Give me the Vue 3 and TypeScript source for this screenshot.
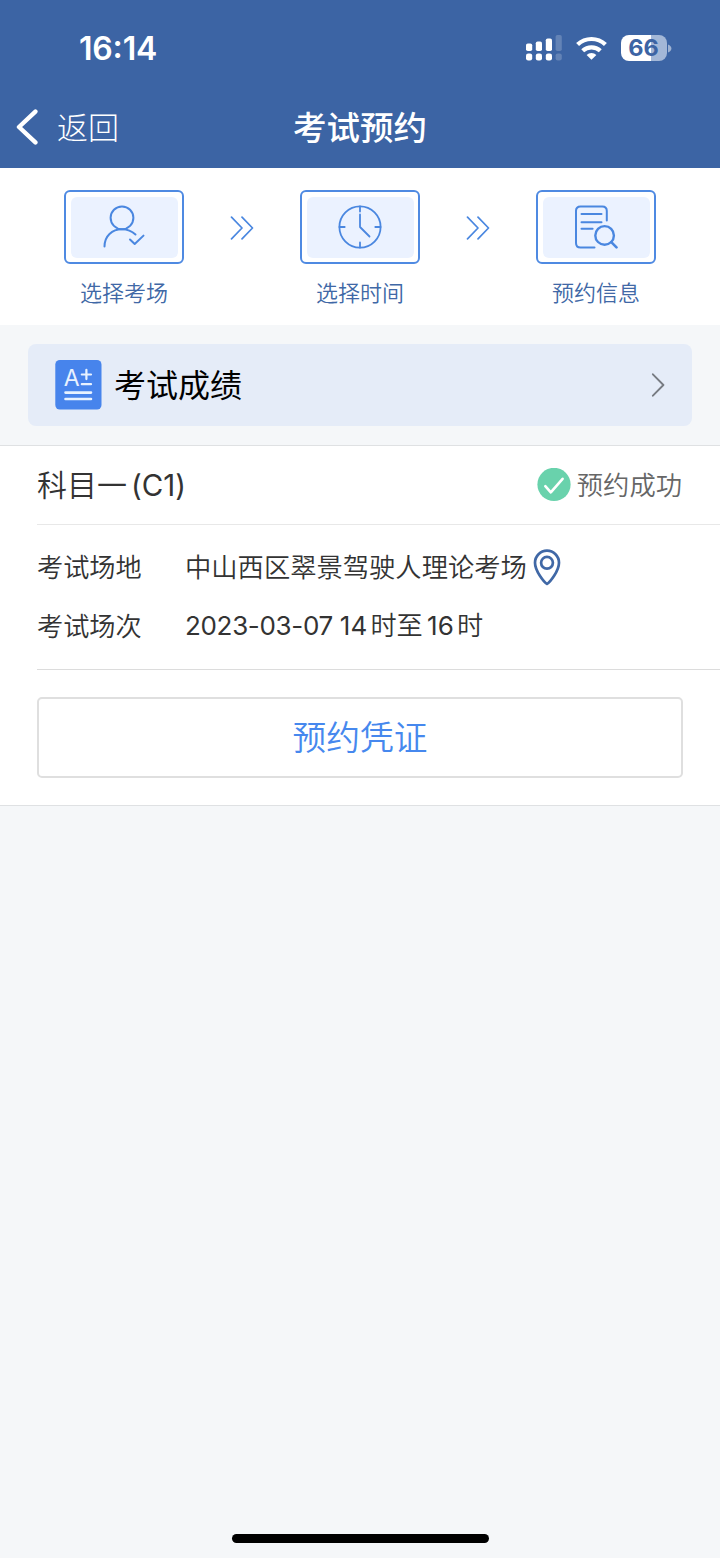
<script setup lang="ts">
interface Step {
  label: string
  icon: 'person' | 'clock' | 'document'
}

const steps: Step[] = [
  { label: '选择考场', icon: 'person' },
  { label: '选择时间', icon: 'clock' },
  { label: '预约信息', icon: 'document' },
]
</script>

<template>
  <div class="screen">
    <header class="header">
      <div class="status">
        <span class="time">16<span class="colon">:</span>14</span>
        <div class="indicators">
          <svg class="signal" width="36" height="26" viewBox="0 0 36 26" fill="#fff">
            <rect x="0" y="8.5" width="6.2" height="7.5" rx="1.8" />
            <rect x="9.8" y="6.5" width="6.2" height="9.5" rx="1.8" />
            <rect x="19.8" y="3.5" width="6.2" height="12.5" rx="1.8" />
            <rect x="29.6" y="0" width="6.2" height="16" rx="1.8" opacity=".2" />
            <rect x="0" y="18.4" width="6.2" height="7" rx="2.2" />
            <rect x="9.8" y="18.4" width="6.2" height="7" rx="2.2" />
            <rect x="19.8" y="18.4" width="6.2" height="7" rx="2.2" />
            <rect x="29.6" y="18.4" width="6.2" height="7" rx="2.2" opacity=".2" />
          </svg>
          <svg class="wifi" width="31" height="24" viewBox="0 0 31 24" fill="none" stroke="#fff" stroke-width="4.2">
            <path d="M1.6 8.6A20 20 0 0 1 29.4 8.6" />
            <path d="M6.7 14.8A12.8 12.8 0 0 1 24.3 14.8" />
            <path d="M15.5 23.8L10.6 19A7.2 7.2 0 0 1 20.4 19Z" fill="#fff" stroke="none" />
          </svg>
          <div class="battery">
            <div class="cell">66</div>
            <svg width="4" height="9" viewBox="0 0 4 9"><path d="M0 0.5Q3.4 2 3.4 4.5T0 8.5Z" fill="#fff" opacity=".5" /></svg>
          </div>
        </div>
      </div>
      <div class="nav">
        <div class="back">
          <svg width="22" height="36" viewBox="0 0 22 36" fill="none" stroke="#fff" stroke-width="4.4" stroke-linecap="round" stroke-linejoin="round">
            <path d="M19.4 2.6L3 18L19.4 33.4" />
          </svg>
          <span class="back-text">返回</span>
        </div>
        <h1 class="title">考试预约</h1>
        <div></div>
      </div>
    </header>

    <section class="steps">
      <template v-for="(step, i) in steps" :key="step.label">
        <svg v-if="i > 0" class="arrows" width="24" height="24" viewBox="0 0 24 24" fill="none" stroke="#4a87e0" stroke-width="1.7" stroke-linecap="round" stroke-linejoin="round">
          <path d="M1.5 1.2L12 12L1.5 22.8M12 1.2L22.5 12L12 22.8" />
        </svg>
        <div class="step">
          <div class="frame">
            <div class="tile">
              <svg v-if="step.icon === 'person'" width="44" height="46" viewBox="0 0 44 46" fill="none" stroke="#4a87e0" stroke-width="2" stroke-linecap="round" stroke-linejoin="round">
                <circle cx="20" cy="13.8" r="11.4" />
                <path d="M2.5 42.5C2.5 32 10 25.2 20 25.2C25.5 25.2 30 27.2 33.5 30.5" />
                <path d="M28 35.5L32.7 40L41.5 31.6" />
              </svg>
              <svg v-else-if="step.icon === 'clock'" width="44" height="46" viewBox="0 0 44 46" fill="none" stroke="#4a87e0" stroke-width="1.8" stroke-linecap="round" stroke-linejoin="round">
                <circle cx="22" cy="23" r="20.6" />
                <path d="M22 2.5V7.5M22 38.5V43.5M1.5 23H6.7M37.3 23H42.5M22 10.5V23L31.5 32.5" />
              </svg>
              <svg v-else width="44" height="46" viewBox="0 0 44 46" fill="none" stroke="#4a87e0" stroke-width="2" stroke-linecap="round" stroke-linejoin="round">
                <path d="M20.5 43.5H6.5Q2 43.5 2 39V6.9Q2 2.4 6.5 2.4H28.3Q32.8 2.4 32.8 6.9V16.5" />
                <path d="M7.5 10H27.5M7.5 18.3H27.5M7.5 24.8H18.6" />
                <circle cx="30.6" cy="31.4" r="9.3" stroke-width="2.4" />
                <path d="M37.3 38.2L42.5 43.4" stroke-width="2.6" />
              </svg>
            </div>
          </div>
          <span class="step-label">{{ step.label }}</span>
        </div>
      </template>
    </section>

    <section class="score-band">
      <div class="score">
        <svg width="47" height="50" viewBox="0 0 47 50">
          <rect x="0.3" y="0" width="46.2" height="49.6" rx="4.5" fill="#4784ec" />
          <text class="grade" x="8.8" y="25.6">A</text>
          <path d="M26.8 14.5H36M31.4 9.8V19.1M26.8 24.2H36" fill="none" stroke="#e8f2ff" stroke-width="2.2" stroke-linecap="round" />
          <path d="M10.5 32.6H36M10.5 39H36" stroke="#e8f2ff" stroke-width="2.6" stroke-linecap="round" />
        </svg>
        <span class="score-text">考试成绩</span>
        <svg width="14" height="24" viewBox="0 0 14 24" fill="none" stroke="#777b82" stroke-width="1.9" stroke-linecap="round" stroke-linejoin="round">
          <path d="M1.9 1.3L12.4 12L1.9 22.7" />
        </svg>
      </div>
    </section>

    <section class="card">
      <div class="card-head">
        <span class="subject">科目一<span class="latin">(C1)</span></span>
        <div class="result">
          <svg width="34" height="34" viewBox="0 0 34 34">
            <circle cx="17" cy="16.4" r="16.6" fill="#69d2ac" />
            <path d="M8.3 18.2L13.8 24.4L25.6 10.8" fill="none" stroke="#fff" stroke-width="2.6" stroke-linecap="round" stroke-linejoin="round" />
          </svg>
          <span class="result-text">预约成功</span>
        </div>
      </div>
      <div class="details">
        <div class="row">
          <span class="key">考试场地</span>
          <span class="place">中山西区翠景驾驶人理论考场</span>
          <svg class="pin" width="28" height="37" viewBox="0 0 28 37" fill="none" stroke="#4068a6" stroke-width="2.7" stroke-linejoin="round">
            <path d="M14 35C11 33 2 22 2 13.7A12 12 0 0 1 26 13.7C26 22 17 33 14 35Z" />
            <circle cx="14" cy="13.8" r="5.9" />
          </svg>
        </div>
        <div class="row">
          <span class="key">考试场次</span>
          <span class="session"><span class="date">2023-03-07 </span>14<i>时至</i>16<i>时</i></span>
        </div>
      </div>
      <div class="action">
        <button class="voucher" type="button">预约凭证</button>
      </div>
    </section>

    <div class="home-bar"></div>
  </div>
</template>

<style>
body {
  margin: 0;
  background: #f5f7f9;
}
</style>

<style scoped>
.screen {
  box-sizing: border-box;
  width: 720px;
  height: 1558px;
  display: flex;
  flex-direction: column;
  overflow: hidden;
  background: #f5f7f9;
  font-family: Inter, "Noto Sans CJK SC", sans-serif;
  color: #333;
  white-space: nowrap;
}
.screen svg {
  display: block;
  flex: none;
}
.header {
  height: 168px;
  flex: none;
  background: #3c64a4;
  color: #fff;
}
.status {
  height: 88px;
  box-sizing: border-box;
  padding: 8px 48.5px 0 79px;
  display: flex;
  align-items: center;
  justify-content: space-between;
}
.time {
  font-size: 32px;
  font-weight: 600;
  letter-spacing: -0.2px;
}
.colon {
  display: inline-block;
  transform: translateY(-2px);
}
.indicators {
  display: flex;
  align-items: center;
}
.wifi {
  margin: 0 14px 0 13.5px;
}
.battery {
  display: flex;
  align-items: center;
  gap: 1px;
}
.cell {
  width: 46px;
  height: 26px;
  border-radius: 8px;
  background: linear-gradient(90deg, #fff 66%, #a3b7d7 66%);
  color: #3c64a4;
  font-size: 23.5px;
  font-weight: 700;
  line-height: 26px;
  text-align: center;
}
.nav {
  height: 80px;
  padding-bottom: 4px;
  box-sizing: border-box;
  display: grid;
  grid-template-columns: 1fr auto 1fr;
  align-items: center;
}
.back {
  display: flex;
  align-items: center;
  gap: 19px;
  padding-left: 16px;
  font-family: "Noto Sans CJK SC", sans-serif;
  font-size: 31px;
  font-weight: 300;
  line-height: 40px;
}
.back svg {
  margin-top: 2px;
}
.title {
  margin: 0;
  font-family: "Noto Sans CJK SC", sans-serif;
  font-size: 33.5px;
  font-weight: 500;
  line-height: 44px;
}
.steps {
  height: 157px;
  flex: none;
  box-sizing: border-box;
  padding: 22px 64px 0;
  display: flex;
  justify-content: space-between;
  align-items: flex-start;
  background: #fff;
}
.arrows {
  margin-top: 26px;
}
.step {
  width: 120px;
  display: flex;
  flex-direction: column;
  align-items: center;
}
.frame {
  box-sizing: border-box;
  width: 120px;
  height: 74px;
  padding: 4.5px;
  border: 2px solid #4f8ae2;
  border-radius: 6px;
}
.tile {
  height: 100%;
  border-radius: 6px;
  background: #ebf2ff;
  display: flex;
  align-items: center;
  justify-content: center;
}
.step-label {
  margin-top: 11px;
  font-family: "Noto Sans CJK SC", sans-serif;
  font-size: 22px;
  font-weight: 350;
  line-height: 32px;
  color: #4068a6;
}
.score-band {
  height: 120px;
  flex: none;
  box-sizing: border-box;
  padding: 19px 28px;
}
.score {
  height: 82px;
  box-sizing: border-box;
  padding: 0 27px;
  display: flex;
  align-items: center;
  border-radius: 8px;
  background: #e5ecf8;
}
.grade {
  font-family: Inter, sans-serif;
  font-size: 23px;
  fill: #e8f2ff;
}
.score-text {
  flex: 1;
  margin-left: 12px;
  padding-bottom: 4px;
  font-family: "Noto Sans CJK SC", sans-serif;
  font-size: 32px;
  line-height: 44px;
  color: #000;
}
.card {
  height: 361px;
  flex: none;
  box-sizing: border-box;
  padding-left: 37px;
  border-top: 1px solid #dfe1e3;
  border-bottom: 1px solid #dfe1e3;
  background: #fff;
}
.card-head {
  height: 79px;
  box-sizing: border-box;
  padding-right: 38px;
  display: flex;
  align-items: center;
  justify-content: space-between;
  border-bottom: 1px solid #e8e8e8;
}
.subject {
  padding-bottom: 3px;
  font-family: "Noto Sans CJK SC", sans-serif;
  font-size: 30px;
  font-weight: 350;
  line-height: 40px;
}
.latin {
  margin-left: 4px;
  font-family: Inter, sans-serif;
  font-size: 29.5px;
  font-weight: 400;
}
.result {
  display: flex;
  align-items: center;
  gap: 6px;
  font-family: "Noto Sans CJK SC", sans-serif;
  font-size: 26.3px;
  font-weight: 350;
  line-height: 36px;
  color: #666;
}
.result-text {
  padding-bottom: 2px;
}
.details {
  height: 145px;
  box-sizing: border-box;
  padding-top: 12px;
  border-bottom: 1px solid #dcdcdc;
}
.row {
  height: 59px;
  display: flex;
  align-items: center;
  font-family: "Noto Sans CJK SC", sans-serif;
  font-size: 26.2px;
  font-weight: 350;
  line-height: 36px;
}
.key {
  width: 148px;
  padding-bottom: 2px;
}
.place {
  padding-bottom: 2px;
  font-size: 26.3px;
}
.pin {
  margin: 2px 0 0 6px;
}
.session {
  padding-bottom: 1px;
  font-family: Inter, sans-serif;
  font-size: 26px;
  font-weight: 400;
}
.date {
  letter-spacing: -0.33px;
}
.session i {
  margin: 0 4.3px 0 3.2px;
  font-family: "Noto Sans CJK SC", sans-serif;
  font-size: 26.2px;
  font-style: normal;
  font-weight: 350;
}
.action {
  padding: 27px 37px 0 0;
}
.voucher {
  display: block;
  box-sizing: border-box;
  width: 100%;
  height: 81px;
  padding: 0 0 3px;
  border: 2px solid #dfdfdf;
  border-radius: 5px;
  background: #fff;
  color: #4688ee;
  font-family: "Noto Sans CJK SC", sans-serif;
  font-size: 33.7px;
  font-weight: 350;
  line-height: 44px;
}
.home-bar {
  width: 257px;
  height: 9px;
  margin: auto auto 15px;
  border-radius: 5px;
  background: #000;
}
</style>
